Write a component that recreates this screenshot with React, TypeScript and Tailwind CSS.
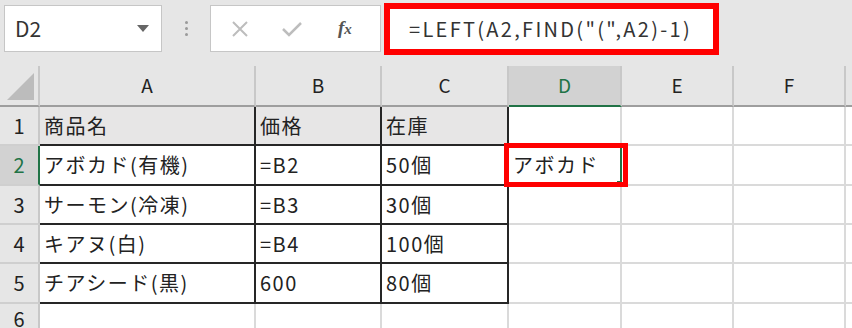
import React from 'react';

const FONT = { fontFamily: '"Noto Sans CJK JP", "Noto Sans", sans-serif' };

type Cell = { text?: string; cls: string };

const grid = 'border-r-2 border-b-2 border-r-[#dadada] border-b-[#dadada] bg-white';
const boxed = 'border-r-2 border-b-2 border-r-[#262626] border-b-[#262626] bg-white';
const boxedHead = 'border-r-2 border-b-2 border-r-[#262626] border-b-[#262626] bg-[#e7e6e6]';

const rows: { num: string; active?: boolean; cells: Cell[] }[] = [
  {
    num: '1',
    cells: [
      { text: '商品名', cls: boxedHead },
      { text: '価格', cls: boxedHead },
      { text: '在庫', cls: boxedHead },
      { cls: 'border-r-2 border-b-2 border-r-[#dadada] border-b-[#217346] bg-white' },
      { cls: grid },
      { cls: grid },
    ],
  },
  {
    num: '2',
    active: true,
    cells: [
      { text: 'アボカド(有機)', cls: boxed },
      { text: '=B2', cls: boxed },
      { text: '50個', cls: boxed },
      { text: 'アボカド', cls: 'border-r-2 border-b-2 border-r-[#217346] border-b-[#217346] bg-white' },
      { cls: grid },
      { cls: grid },
    ],
  },
  {
    num: '3',
    cells: [
      { text: 'サーモン(冷凍)', cls: boxed },
      { text: '=B3', cls: boxed },
      { text: '30個', cls: boxed },
      { cls: grid },
      { cls: grid },
      { cls: grid },
    ],
  },
  {
    num: '4',
    cells: [
      { text: 'キアヌ(白)', cls: boxed },
      { text: '=B4', cls: boxed },
      { text: '100個', cls: boxed },
      { cls: grid },
      { cls: grid },
      { cls: grid },
    ],
  },
  {
    num: '5',
    cells: [
      { text: 'チアシード(黒)', cls: boxed },
      { text: '600', cls: boxed },
      { text: '80個', cls: boxed },
      { cls: grid },
      { cls: grid },
      { cls: grid },
    ],
  },
  {
    num: '6',
    cells: [
      { cls: grid },
      { cls: grid },
      { cls: grid },
      { cls: grid },
      { cls: grid },
      { cls: grid },
    ],
  },
];

const cols = ['A', 'B', 'C', 'D', 'E', 'F'];

function Toolbar() {
  return (
    <div className="h-[66px] bg-[#e6e6e6] flex items-start pt-[5px] relative">
      <div className="ml-[4px] w-[158px] h-[47px] bg-white border border-[#c6c6c6] flex items-center justify-between pl-[10px] pr-[12px]">
        <span className="text-[21px] text-[#333]">D2</span>
        <svg width="12" height="7" viewBox="0 0 12 7">
          <polygon points="0,0 12,0 6,7" fill="#666" />
        </svg>
      </div>
      <div className="w-[48px] h-[47px] flex flex-col items-center justify-center gap-[3px]">
        <span className="w-[3px] h-[3px] rounded-full bg-[#9a9a9a]" />
        <span className="w-[3px] h-[3px] rounded-full bg-[#9a9a9a]" />
        <span className="w-[3px] h-[3px] rounded-full bg-[#9a9a9a]" />
      </div>
      <div className="w-[171px] h-[47px] bg-white border border-[#c6c6c6] flex items-center pl-[19px] gap-[31px]">
        <svg width="20" height="20" viewBox="0 0 20 20">
          <path d="M3 3 L17 17 M17 3 L3 17" stroke="#bdbdbd" strokeWidth="2" />
        </svg>
        <svg width="22" height="20" viewBox="0 0 22 20">
          <path d="M2 10 L8 16 L20 4" stroke="#bdbdbd" strokeWidth="2.5" fill="none" />
        </svg>
        <span className="italic text-[#555] font-bold text-[19px] ml-[4px]" style={{ fontFamily: '"Liberation Serif", serif' }}>
          f<span className="text-[15px]">x</span>
        </span>
      </div>
      <div className="ml-[3px] -mt-[2px] w-[335px] h-[52px] bg-white border-[6px] border-[#ff0000] flex items-center pl-[19px]">
        <span className="text-[20px] text-[#333] tracking-[2.3px]">=LEFT(A2,FIND("(",A2)-1)</span>
      </div>
    </div>
  );
}

export default function App() {
  return (
    <div className="w-[852px] h-[328px] overflow-hidden bg-white text-[#222]" style={FONT}>
      <Toolbar />
      <div className="relative grid grid-cols-[40px_216px_126px_127px_113px_112px_112px_1fr] grid-rows-[41px_39px_40px_39px_39px_40px_1fr] h-[262px]">
        <div className="bg-[#e6e6e6] border-r-2 border-b-2 border-r-[#c8c8c8] border-b-[#9e9e9e] relative">
          <svg className="absolute left-[7px] top-[7px]" width="28" height="28" viewBox="0 0 28 28">
            <polygon points="0,27 27,27 27,0" fill="#bcbcbc" />
          </svg>
        </div>
        {cols.map((c) =>
          c === 'D' ? (
            <div key={c} className="bg-[#d2d2d2] border-r-2 border-b-2 border-r-[#c8c8c8] border-b-[#217346] flex items-center justify-center text-[19px] text-[#217346]">
              {c}
            </div>
          ) : (
            <div key={c} className="bg-[#e6e6e6] border-r-2 border-b-2 border-r-[#c8c8c8] border-b-[#9e9e9e] flex items-center justify-center text-[19px]">
              {c}
            </div>
          )
        )}
        <div className="bg-[#e6e6e6] border-b-2 border-b-[#9e9e9e]" />
        {rows.map((r) => (
          <React.Fragment key={r.num}>
            {r.active ? (
              <div className="bg-[#d2d2d2] border-r-2 border-b-2 border-r-[#217346] border-b-[#cfcfcf] flex items-center justify-center text-[20px] text-[#217346]">
                {r.num}
              </div>
            ) : (
              <div className="bg-[#e6e6e6] border-r-2 border-b-2 border-r-[#c8c8c8] border-b-[#cfcfcf] flex items-center justify-center text-[20px]">
                {r.num}
              </div>
            )}
            {r.cells.map((cell, i) => (
              <div key={i} className={`${cell.cls} flex items-center pl-[4px] text-[20px] tracking-[1.5px] whitespace-nowrap overflow-visible`}>
                {cell.text}
              </div>
            ))}
            <div className="border-b-2 border-b-[#dadada] bg-white" />
          </React.Fragment>
        ))}
        {/* fill handle */}
        <div className="absolute left-[617px] top-[115px] w-[5px] h-[5px] bg-[#217346]" />
        {/* highlight box over D2 */}
        <div className="absolute left-[504px] top-[77px] w-[124px] h-[44px] border-[5px] border-[#ff0000]" />
      </div>
    </div>
  );
}
